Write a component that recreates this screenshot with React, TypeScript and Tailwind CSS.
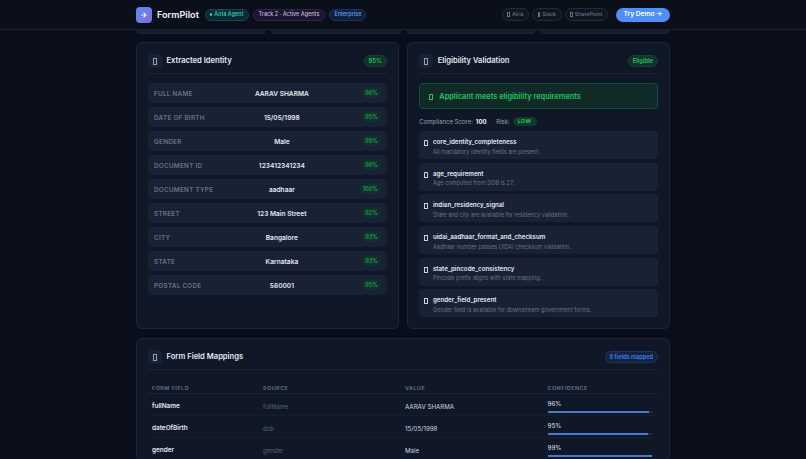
import type { ReactNode } from 'react'

const identity = [
  ['FULL NAME', 'AARAV SHARMA', '96%'],
  ['DATE OF BIRTH', '15/05/1998', '95%'],
  ['GENDER', 'Male', '99%'],
  ['DOCUMENT ID', '123412341234', '98%'],
  ['DOCUMENT TYPE', 'aadhaar', '100%'],
  ['STREET', '123 Main Street', '92%'],
  ['CITY', 'Bangalore', '93%'],
  ['STATE', 'Karnataka', '93%'],
  ['POSTAL CODE', '560001', '95%'],
]

const checks = [
  ['core_identity_completeness', 'All mandatory identity fields are present.'],
  ['age_requirement', 'Age computed from DOB is 27.'],
  ['indian_residency_signal', 'State and city are available for residency validation.'],
  ['uidai_aadhaar_format_and_checksum', 'Aadhaar number passes UIDAI checksum validation.'],
  ['state_pincode_consistency', 'Pincode prefix aligns with state mapping.'],
  ['gender_field_present', 'Gender field is available for downstream government forms.'],
]

const mappings = [
  { field: 'fullName', source: 'fullName', value: 'AARAV SHARMA', conf: 96 },
  { field: 'dateOfBirth', source: 'dob', value: '15/05/1998', conf: 95 },
  { field: 'gender', source: 'gender', value: 'Male', conf: 99 },
]

// the emoji icons show up as empty boxes in the picture
function Tofu({ className }: { className: string }) {
  return <span className={`block shrink-0 rounded-[0.5px] border-[0.7px] ${className}`} />
}

function CardHead({ title, badge }: { title: string; badge: ReactNode }) {
  return (
    <div className="flex h-[20px] items-start justify-between border-b border-[#1b2536]">
      <div className="flex items-start gap-[4.5px]">
        <span className="flex h-[14px] w-[14px] items-center justify-center rounded-[4px] bg-[#182234]">
          <Tofu className="h-[7px] w-[3.6px] border-[#94a3b8]" />
        </span>
        <h2 className="mt-[2px] text-[7.6px] font-semibold leading-[10px] text-[#e2e8f0]">{title}</h2>
      </div>
      {badge}
    </div>
  )
}

function GreenBadge({ children }: { children: ReactNode }) {
  return (
    <span className="mt-[1px] flex h-[12px] items-center rounded-full border border-[#17402f] bg-[#11322a] px-[4px] text-[5.8px] font-semibold text-[#22c55e]">
      {children}
    </span>
  )
}

export default function App() {
  return (
    <div className="h-[459px] w-[806px] overflow-hidden bg-[#090e1a] font-['Inter',sans-serif] text-[#e2e8f0] antialiased">
      <header className="flex h-[30px] items-center justify-between border-b border-[#1c2433] bg-[#0a0f1a] px-[136px]">
        <div className="flex items-center">
          <span className="flex h-4 w-4 items-center justify-center rounded-[4px] bg-gradient-to-br from-[#5b8def] to-[#8069dd] text-[8px] text-white">
            ✈
          </span>
          <span className="ml-[5px] text-[9.1px] font-semibold text-[#f1f5f9]">FormPilot</span>
          <div className="ml-[6px] flex items-center gap-[4px] text-[5.5px] font-medium">
            <span className="flex h-[12px] items-center gap-[2px] rounded-full border border-[#164450] bg-[#0d2a33] px-[4px] text-[#2dd4bf]">
              <span className="h-[2.5px] w-[2.5px] rounded-full bg-[#22d3ee]" />
              Airia Agent
            </span>
            <span className="flex h-[12px] items-center rounded-full border border-[#2d2545] bg-[#1a1630] px-[5px] text-[#c4b5d8]">
              Track 2 · Active Agents
            </span>
            <span className="flex h-[12px] items-center rounded-full border border-[#1e3358] bg-[#10203c] px-[4px] text-[#60a5fa]">
              Enterprise
            </span>
          </div>
        </div>
        <div className="flex items-center text-[5.3px] font-medium text-[#64748b]">
          <span className="flex h-[13px] w-[27px] items-center justify-center gap-[2px] rounded-full border border-[#232c3c] bg-[#10151f]">
            <Tofu className="h-[5px] w-[2.6px] border-[#64748b]" />
            Airia
          </span>
          <span className="ml-[3px] flex h-[13px] w-[29.5px] items-center justify-center gap-[2px] rounded-full border border-[#232c3c] bg-[#10151f]">
            <Tofu className="h-[5px] w-[2.6px] border-[#64748b]" />
            Slack
          </span>
          <span className="ml-[3px] flex h-[13px] w-[43.5px] items-center justify-center gap-[2px] rounded-full border border-[#232c3c] bg-[#10151f]">
            <Tofu className="h-[5px] w-[2.6px] border-[#64748b]" />
            SharePoint
          </span>
          <span className="ml-[8px] flex h-[14px] w-[54px] items-center justify-center rounded-full bg-[#4f8ff7] text-[6.6px] font-semibold text-white">
            Try Demo →
          </span>
        </div>
      </header>

      <main className="mx-[136px] flex flex-col">
        <div className="grid h-[4px] grid-cols-4 gap-[5px]">
          {[0, 1, 2, 3].map((i) => (
            <div key={i} className="rounded-b-[5px] border-x border-b border-[#1b2536] bg-[#141d2e]" />
          ))}
        </div>

        <div className="mt-[8px] grid grid-cols-2 gap-[8.5px]">
          <section className="rounded-[6px] border border-[#1d2738] bg-[#101827] px-[11px] pt-[11px]">
            <CardHead title="Extracted Identity" badge={<GreenBadge>95%</GreenBadge>} />
            <div className="mt-[9px] flex flex-col gap-[4px]">
              {identity.map(([label, value, conf]) => (
                <div key={label} className="grid h-[20px] grid-cols-[47px_1fr_18px] items-center rounded-[4px] bg-[#182234] px-[6px]">
                  <span className="whitespace-nowrap pt-[4px] text-[6.3px] font-semibold tracking-[0.3px] text-[#64748b]">{label}</span>
                  <span className="pt-[4px] text-center text-[6.6px] font-semibold text-[#e2e8f0]">{value}</span>
                  <span className="flex justify-end">
                    <span className="flex h-[10px] items-center rounded-full bg-[#11322a] px-[3px] text-[5.6px] font-medium text-[#22a55e]">
                      {conf}
                    </span>
                  </span>
                </div>
              ))}
            </div>
          </section>

          <section className="rounded-[6px] border border-[#1d2738] bg-[#101827] px-[11px] py-[11px]">
            <CardHead title="Eligibility Validation" badge={<GreenBadge>Eligible</GreenBadge>} />
            <div className="mt-[9px] flex h-[26px] items-center gap-[6px] rounded-[4px] border border-[#1a4a38] bg-[#0f2a27] px-[9px] pt-[2px] text-[7.4px] font-semibold text-[#22c55e]">
              <Tofu className="h-[6px] w-[4px] border-[#22c55e]" />
              Applicant meets eligibility requirements
            </div>
            <div className="mt-[7px] flex h-[10px] items-center text-[6px] text-[#94a3b8]">
              Compliance Score:
              <b className="ml-[3px] font-bold text-[#f1f5f9]">100</b>
              <span className="mx-[4px] text-[#475569]">·</span>
              Risk:
              <span className="ml-[3px] flex h-[9px] items-center rounded-full bg-[#123a2c] px-[5px] text-[5.4px] font-bold tracking-[0.4px] text-[#22c55e]">
                LOW
              </span>
            </div>
            <div className="mt-[5px] flex flex-col gap-[3.7px]">
              {checks.map(([name, desc]) => (
                <div key={name} className="flex h-[28px] items-start gap-[5px] rounded-[4px] bg-[#182234] pl-[5px] pt-[7px]">
                  <Tofu className="mt-[2px] h-[6px] w-[3.7px] border-[#cbd5e1]" />
                  <div className="flex flex-col gap-[1.5px]">
                    <span className="text-[6.2px] font-semibold leading-[8px] text-[#e2e8f0]">{name}</span>
                    <span className="text-[5.6px] leading-[8px] text-[#64748b]">{desc}</span>
                  </div>
                </div>
              ))}
            </div>
          </section>
        </div>

        <section className="mt-[9px] rounded-[6px] border border-[#1d2738] bg-[#101827] px-[11px] pt-[11px]">
          <CardHead
            title="Form Field Mappings"
            badge={
              <span className="mt-[1px] flex h-[12px] items-center rounded-full border border-[#1e3358] bg-[#13233f] px-[4px] text-[5.6px] font-semibold text-[#3b82f6]">
                8 fields mapped
              </span>
            }
          />
          <div className="mt-[8px] grid h-[16px] grid-cols-[111px_142px_142.5px_1fr] items-center border-b border-[#1b2536] px-[4px] pt-[4px] text-[5.4px] font-semibold tracking-[0.5px] text-[#64748b]">
            <span>FORM FIELD</span>
            <span>SOURCE</span>
            <span>VALUE</span>
            <span>CONFIDENCE</span>
          </div>
          {mappings.map((m) => (
            <div key={m.field} className="grid h-[22px] grid-cols-[111px_142px_142.5px_1fr] items-center border-b border-[#151e2d] pl-[4px] pr-[5px] pt-[4px]">
              <span className="text-[6.4px] font-semibold text-[#e2e8f0]">{m.field}</span>
              <span className="text-[6px] text-[#56637a]">{m.source}</span>
              <span className="text-[6.2px] text-[#cbd5e1]">{m.value}</span>
              <div className="flex flex-col gap-[3px] pb-[1px]">
                <span className="text-[6.2px] font-medium leading-[8px] text-[#cbd5e1]">{m.conf}%</span>
                <div className="h-[1.5px] bg-[#1e293b]">
                  <div className="h-full bg-[#4a78c8]" style={{ width: `${m.conf}%` }} />
                </div>
              </div>
            </div>
          ))}
        </section>
      </main>
    </div>
  )
}
